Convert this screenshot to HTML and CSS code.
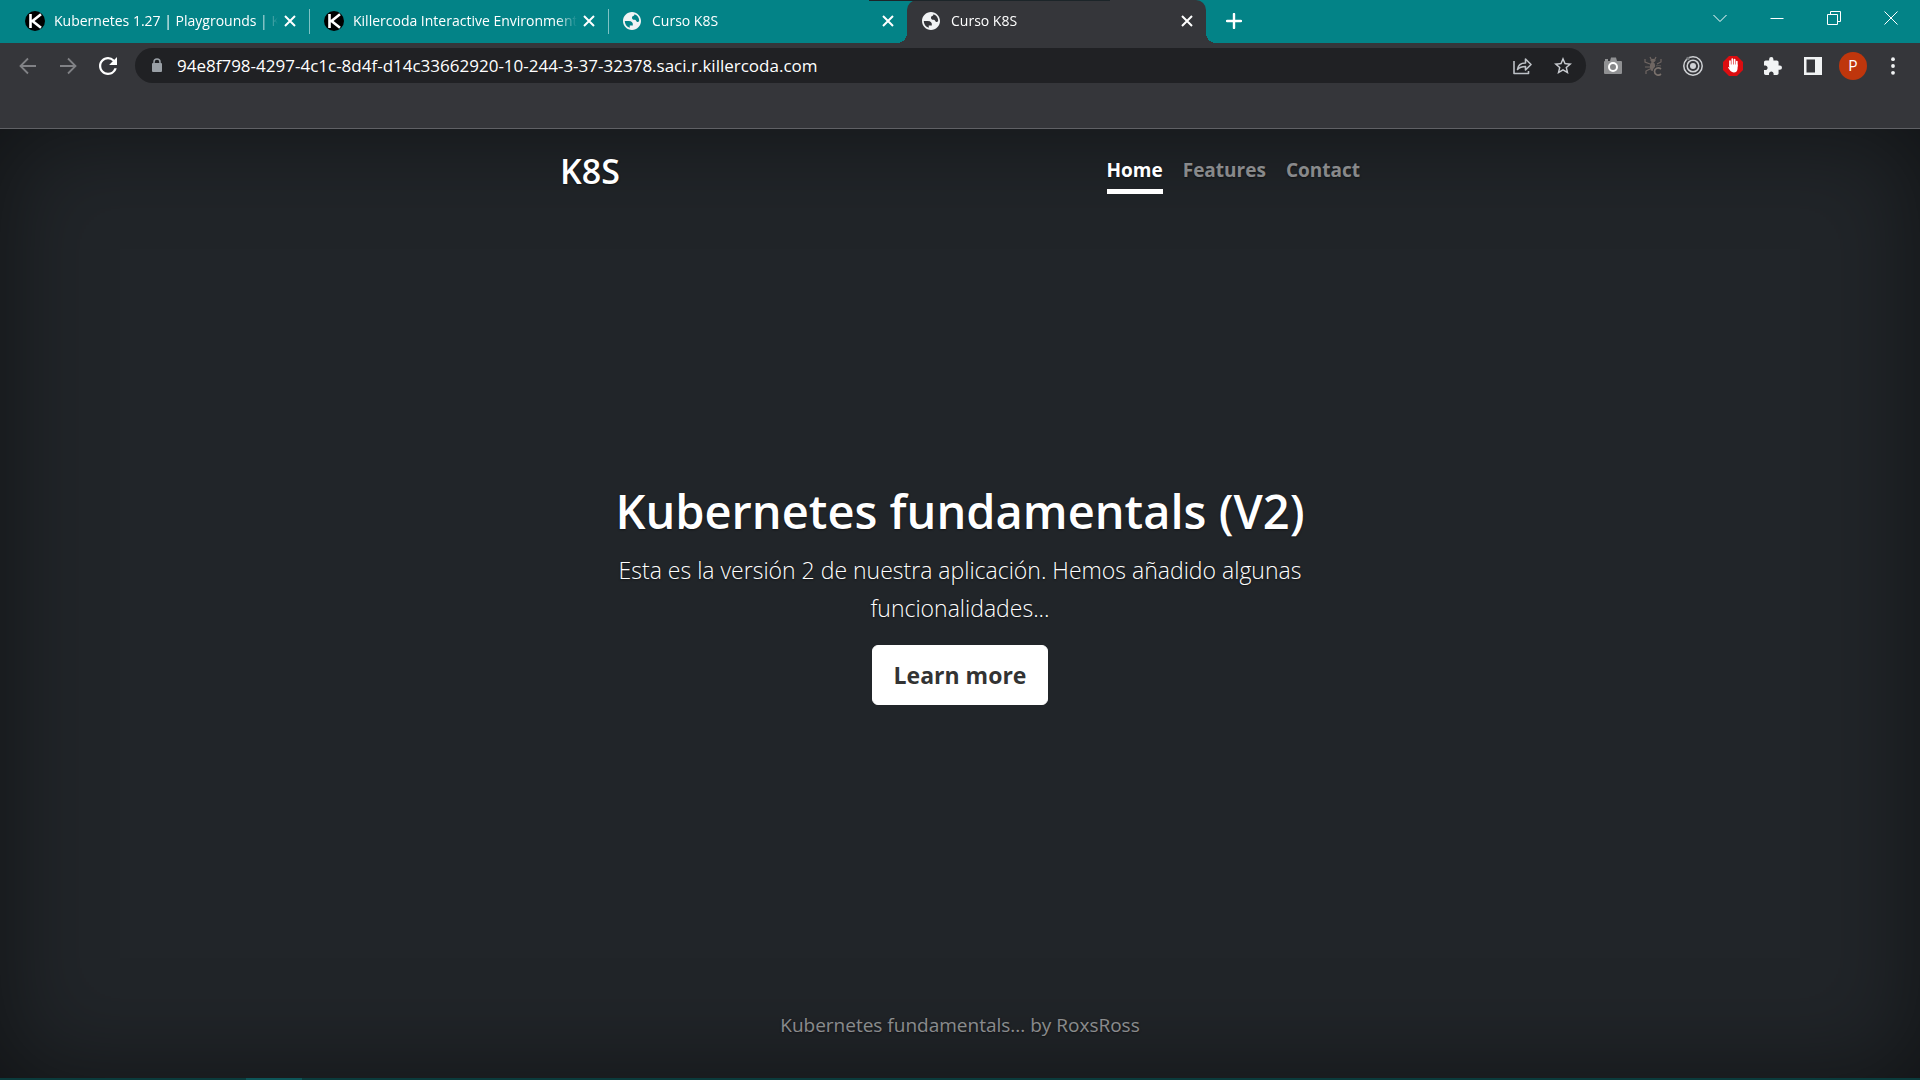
FILE: index.html
```html
<!DOCTYPE html>
<html lang="es">
<head>
<meta charset="utf-8">
<title>Curso K8S</title>
<link rel="stylesheet" href="styles.css">
</head>
<body>
<svg class="defs" aria-hidden="true">
  <symbol id="killercoda" viewBox="0 0 20 20"><circle cx="10" cy="10" r="10" fill="#000"/><path d="M5.500 3v14M16 3.300 7.500 10l8.500 6.700" fill="none" stroke="#fff" stroke-width="2.600"/></symbol>
  <symbol id="globe" viewBox="2 2 20 20"><path fill="#f1f3f4" d="M12 2C6.480 2 2 6.480 2 12s4.480 10 10 10 10-4.480 10-10S17.520 2 12 2zM4 12h4.400c3.407.022 4.922 1.730 4.543 5.127H9.488v2.470A8.004 8.004 0 0 1 4 12zm16 0c-.5.600-1 1-1.700 1-1.700 0-1.300-2.500-3.800-2.500-1.400 0-2.500-.5-2.500-2.200 0-2.200 2.700-1.300 2.700-3.800A8 8 0 0 1 20 12z"/></symbol>
  <symbol id="close" viewBox="0 0 12 12"><path d="M1 1l10 10M11 1 1 11" stroke="#fff" stroke-width="2"/></symbol>
</svg>

<div class="browser">
  <div class="tabstrip">
    <div class="tab">
      <svg class="favicon killer"><use href="#killercoda"/></svg>
      <button class="tab-title">Kubernetes 1.27 | Playgrounds | Killercoda</button>
      <button class="tab-close" aria-label="Close tab"><svg><use href="#close"/></svg></button>
    </div>
    <div class="tab">
      <svg class="favicon killer"><use href="#killercoda"/></svg>
      <button class="tab-title">Killercoda Interactive Environments</button>
      <button class="tab-close" aria-label="Close tab"><svg><use href="#close"/></svg></button>
    </div>
    <div class="tab last-idle">
      <svg class="favicon"><use href="#globe"/></svg>
      <button class="tab-title">Curso K8S</button>
      <button class="tab-close" aria-label="Close tab"><svg><use href="#close"/></svg></button>
    </div>
    <div class="tab active">
      <svg class="favicon"><use href="#globe"/></svg>
      <button class="tab-title">Curso K8S</button>
      <button class="tab-close" aria-label="Close tab"><svg><use href="#close"/></svg></button>
    </div>
    <button class="new-tab" aria-label="New tab"><svg width="16" height="16" viewBox="0 0 16 16"><path d="M8 1v14M1 8h14" stroke="#fff" stroke-width="2.400" stroke-linecap="round"/></svg></button>
    <div class="window-controls">
      <button aria-label="Search tabs"><svg width="14" height="14" viewBox="0 0 14 14"><path d="m.5 4 6.500 6.500L13.500 4"/></svg></button>
      <button aria-label="Minimize"><svg width="14" height="14" viewBox="0 0 14 14"><path d="M.5 7.500h13"/></svg></button>
      <button aria-label="Restore"><svg width="14" height="14" viewBox="0 0 14 14"><path d="M.5 3.500h10v10H.5zM3.500 3.500v-3h10v10h-3"/></svg></button>
      <button aria-label="Close window"><svg width="14" height="14" viewBox="0 0 14 14"><path d="m.5.5 13 13M13.500.5l-13 13"/></svg></button>
    </div>
  </div>

  <div class="toolbar">
    <button class="tool" aria-label="Back"><svg width="18" height="18" viewBox="0 0 18 18"><path d="M17 9H2M9 1.500 1.500 9 9 16.500" fill="none" stroke="#818286" stroke-width="1.800"/></svg></button>
    <button class="tool" aria-label="Forward"><svg width="18" height="18" viewBox="0 0 18 18"><path d="M1 9h15M9 1.500 16.500 9 9 16.500" fill="none" stroke="#818286" stroke-width="1.800"/></svg></button>
    <button class="tool" aria-label="Reload"><svg width="18" height="18" viewBox="4 4 16 16"><path fill="#fff" d="M17.650 6.350A7.958 7.958 0 0 0 12 4c-4.420 0-7.990 3.580-7.990 8s3.570 8 7.990 8c3.730 0 6.840-2.550 7.730-6h-2.080A5.990 5.990 0 0 1 12 18c-3.310 0-6-2.690-6-6s2.690-6 6-6c1.660 0 3.140.690 4.220 1.780L13 11h7V4l-2.350 2.350z"/></svg></button>
    <form class="omnibox">
      <svg class="lock" width="12" height="15" viewBox="0 0 12 15"><path d="M3 6V4a3 3 0 0 1 6 0v2" fill="none" stroke="#9aa0a6" stroke-width="1.500"/><rect x="1" y="5" width="10" height="9" rx="1" fill="#9aa0a6"/></svg>
      <input type="text" aria-label="Address" value="94e8f798-4297-4c1c-8d4f-d14c33662920-10-244-3-37-32378.saci.r.killercoda.com">
      <button class="tool" type="button" aria-label="Share"><svg width="20" height="18" viewBox="0 0 20 18"><path d="M1 4v12.500h14.500V14M4.500 12.500c.5-4.500 3.500-6.500 8-6.500V2l5.500 5.500-5.500 5.500V9.500c-3.500 0-6 .8-8 3z" fill="none" stroke="#bdc1c6" stroke-width="1.600" stroke-linejoin="round"/></svg></button>
      <button class="tool" type="button" aria-label="Bookmark"><svg width="18" height="18" viewBox="2 2 20 20"><path fill="#c8cbd0" d="m22 9.240-7.190-.620L12 2 9.190 8.630 2 9.240l5.460 4.730L5.820 21 12 17.270 18.180 21l-1.630-7.030L22 9.240zM12 15.400l-3.760 2.270 1-4.280-3.320-2.880 4.380-.380L12 6.100l1.710 4.040 4.380.380-3.320 2.880 1 4.280L12 15.400z"/></svg></button>
    </form>
    <div class="extensions">
      <button class="tool" aria-label="Screenshot"><svg width="20" height="18" viewBox="0 0 20 18"><path fill="#909193" d="M2 4V2h3v2h2l1-3.500h5L14 4h4q1 0 1 1v11q0 1-1 1H2q-1 0-1-1V5q0-1 1-1z"/><circle cx="10" cy="10" r="4" fill="#858688" stroke="#fff" stroke-width="2"/></svg></button>
      <button class="tool" aria-label="Cookie inspector"><svg width="18" height="20" viewBox="0 0 18 20"><g fill="none" stroke="#6f6662" stroke-width="1.200"><path d="M6 1l1.500 3M12 1l-1.500 3M1 3v3l5 2M17 3v3l-4 2M1 11h5M2 18v-3l4-2M12 10h5"/></g><ellipse cx="9" cy="4.500" rx="2.500" ry="1.800" fill="#6f6662"/><ellipse cx="8.500" cy="10.500" rx="2.600" ry="4.500" fill="#6f6662"/><path d="M17 13c-3-2.500-6.500-.5-6.500 2.500s3.500 5 6.500 2.500" fill="none" stroke="#35363a" stroke-width="3.500"/><path d="M17 13c-3-2.500-6.500-.5-6.500 2.500s3.500 5 6.500 2.500" fill="none" stroke="#7a716c" stroke-width="1.700"/></svg></button>
      <button class="tool" aria-label="Recorder"><svg width="20" height="20" viewBox="0 0 20 20"><g fill="none" stroke="#d0d2d5" stroke-width="1.500"><circle cx="10" cy="10" r="9.200"/><circle cx="10" cy="10" r="5.800"/></g><circle cx="10" cy="10" r="3" fill="#d0d2d5"/><circle cx="5" cy="2.500" r="1.800" fill="#77797c"/></svg></button>
      <button class="tool" aria-label="Ad blocker"><svg width="20" height="20" viewBox="0 0 20 20"><path fill="#dc0d10" d="M6 0h8l6 6v8l-6 6H6l-6-6V6z"/><path d="M7 10V5M9.300 9V3M11.600 9V3.500M13.800 10V5.500" stroke="#fff" stroke-width="1.700" stroke-linecap="round"/><path fill="#fff" d="M6.200 8.500h8.400V12c0 3-1.500 4.500-3.800 4.500-2.500 0-4.300-2.500-5.800-5 .2-1 1.200-.5 1.600.2z"/></svg></button>
      <button class="tool" aria-label="Extensions"><svg width="18" height="18" viewBox="2 1 21 21"><path fill="#f1f3f4" d="M20.500 11H19V7c0-1.100-.9-2-2-2h-4V3.500a2.500 2.500 0 0 0-5 0V5H4c-1.100 0-1.990.9-1.990 2v3.800H3.500c1.490 0 2.700 1.210 2.700 2.700s-1.210 2.700-2.700 2.700H2V20c0 1.100.9 2 2 2h3.800v-1.500c0-1.490 1.210-2.700 2.700-2.700s2.700 1.210 2.700 2.700V22H17c1.100 0 2-.9 2-2v-4h1.500a2.500 2.500 0 0 0 0-5z"/></svg></button>
      <button class="tool" aria-label="Side panel"><svg width="18" height="18" viewBox="0 0 18 18"><path fill="#f1f3f4" fill-rule="evenodd" d="M0 0h18v18H0zM2.500 2.500v13H11v-13z"/></svg></button>
      <button class="tool" aria-label="Profile"><span class="avatar">P</span></button>
      <button class="tool" aria-label="Menu"><svg width="4" height="18" viewBox="0 0 4 18"><g fill="#f1f3f4"><circle cx="2" cy="2.200" r="1.900"/><circle cx="2" cy="9" r="1.900"/><circle cx="2" cy="15.800" r="1.900"/></g></svg></button>
    </div>
  </div>
  <div class="top-edge"></div>
</div>

<div class="page">
  <div class="cover">
    <header class="masthead">
      <h3 class="brand">K8S</h3>
      <nav class="nav">
        <a class="nav-link current" href="#">Home</a>
        <a class="nav-link" href="#">Features</a>
        <a class="nav-link" href="#">Contact</a>
      </nav>
    </header>
    <main class="hero">
      <h1>Kubernetes fundamentals (V2)</h1>
      <p class="lead">Esta es la versión 2 de nuestra aplicación. Hemos añadido algunas funcionalidades...</p>
      <p class="lead"><a class="btn" href="#">Learn more</a></p>
    </main>
    <footer class="footer"><p>Kubernetes fundamentals... by RoxsRoss</p></footer>
  </div>
</div>
<div class="taskbar-edge"><span></span></div>
</body>
</html>
```

FILE: styles.css
```css
* { box-sizing: border-box; }

body {
  margin: 0;
  min-height: 100vh;
  display: flex;
  flex-direction: column;
  background: #212529;
  color: #fff;
  font-family: "Open Sans", "Noto Sans", sans-serif;
}

button {
  margin: 0;
  padding: 0;
  border: 0;
  background: none;
  color: inherit;
  font: inherit;
}

svg { display: block; }
.defs { position: absolute; width: 0; height: 0; }

/* Browser chrome */
.browser { position: relative; }

.tabstrip {
  display: flex;
  height: 43px;
  padding-left: 10px;
  background: #038387;
}

.tab {
  position: relative;
  display: flex;
  align-items: center;
  width: 299px;
  padding: 0 7px 2px 15px;
}

.tab:not(.active):not(.last-idle)::after {
  content: "";
  position: absolute;
  right: -1px;
  top: 9px;
  width: 1px;
  height: 25px;
  background: #7fc3c5;
}

.favicon { flex: none; width: 18px; height: 18px; margin-right: 11px; }
.favicon.killer { width: 20px; height: 20px; margin-right: 9px; }

.tab-title {
  flex: 1;
  min-width: 0;
  overflow: hidden;
  white-space: nowrap;
  text-align: left;
  font-size: 14px;
  line-height: 20px;
  -webkit-mask-image: linear-gradient(to right, #000 calc(100% - 20px), transparent);
  mask-image: linear-gradient(to right, #000 calc(100% - 20px), transparent);
}

.tab-close { display: grid; place-items: center; width: 24px; height: 24px; }
.tab-close svg { width: 12px; height: 12px; }

.active { background: #35363a; border-radius: 10px 10px 0 0; }

.active::before,
.active::after {
  content: "";
  position: absolute;
  bottom: 0;
  width: 10px;
  height: 10px;
}

.active::before { right: 100%; background: radial-gradient(circle at 0 0, transparent 10px, #35363a 10px); }
.active::after { left: 100%; background: radial-gradient(circle at 100% 0, transparent 10px, #35363a 10px); }

.new-tab { display: grid; place-items: center; width: 56px; padding-bottom: 1px; }

.window-controls { display: flex; height: 36px; margin-left: auto; padding-right: 1px; }
.window-controls button { display: grid; place-items: center; width: 57px; }
.window-controls path { fill: none; stroke: #fff; stroke-width: 1px; }

.toolbar {
  display: flex;
  align-items: flex-start;
  height: 86px;
  padding: 5px 7px 0 8px;
  background: #35363a;
  border-bottom: 1px solid #606165;
}

.tool { display: grid; place-items: center; flex: none; width: 40px; height: 35px; }

.omnibox {
  flex: 1;
  display: flex;
  align-items: center;
  height: 35px;
  margin-left: 7px;
  padding: 0 3px 0 16px;
  border-radius: 18px;
  background: #202124;
}

.omnibox input {
  flex: 1;
  min-width: 0;
  margin-left: 14px;
  padding: 0;
  border: 0;
  outline: 0;
  background: none;
  color: #fff;
  font: 17px/24px "Open Sans", "Noto Sans", sans-serif;
}

.extensions { display: flex; margin-left: 7px; }

.avatar {
  display: grid;
  place-items: center;
  width: 28px;
  height: 28px;
  border-radius: 50%;
  background: #bf360c;
  font: 14px/28px Roboto, sans-serif;
}

.top-edge {
  position: absolute;
  top: 0;
  left: 869px;
  width: 241px;
  height: 1px;
  background: #1c2529;
}

/* Web page */
.page {
  flex: 1;
  display: flex;
  justify-content: center;
  text-align: center;
  font-size: 19px;
  line-height: 30px;
  text-shadow: 0 1px 2px rgba(0, 0, 0, .5);
  box-shadow: inset 0 0 100px rgba(0, 0, 0, .5);
}

.cover {
  display: flex;
  flex-direction: column;
  width: 100%;
  max-width: 840px;
  padding: 20px;
}

.masthead { display: flex; justify-content: space-between; margin-bottom: auto; }

.brand { margin: 0; font-size: 34px; line-height: 44px; font-weight: 600; }

.nav { display: flex; gap: 20px; }

.nav-link {
  padding: 6px 0 4px;
  border-bottom: 5px solid transparent;
  color: rgba(255, 255, 255, .5);
  font-weight: 700;
  text-decoration: none;
}

.nav-link.current { color: #fff; border-color: #fff; }

.hero { padding: 0 20px; }
.hero h1 { margin: 0 0 10px; font-size: 47px; line-height: 60px; font-weight: 600; }

.lead { margin: 0 0 18px; font-size: 23px; line-height: 38px; font-weight: 300; }

.btn {
  display: inline-block;
  padding: 10px 21px;
  border: 1px solid #fff;
  border-radius: 6px;
  background: #fff;
  color: #333;
  font-weight: 700;
  text-decoration: none;
  text-shadow: none;
}

.footer { margin-top: auto; color: rgba(255, 255, 255, .5); }
.footer p { margin: 0 0 18px; }

.taskbar-edge { height: 2px; padding-left: 246px; background: #0b3b3c; }
.taskbar-edge span { display: block; width: 56px; height: 2px; background: #0d5558; }
```
